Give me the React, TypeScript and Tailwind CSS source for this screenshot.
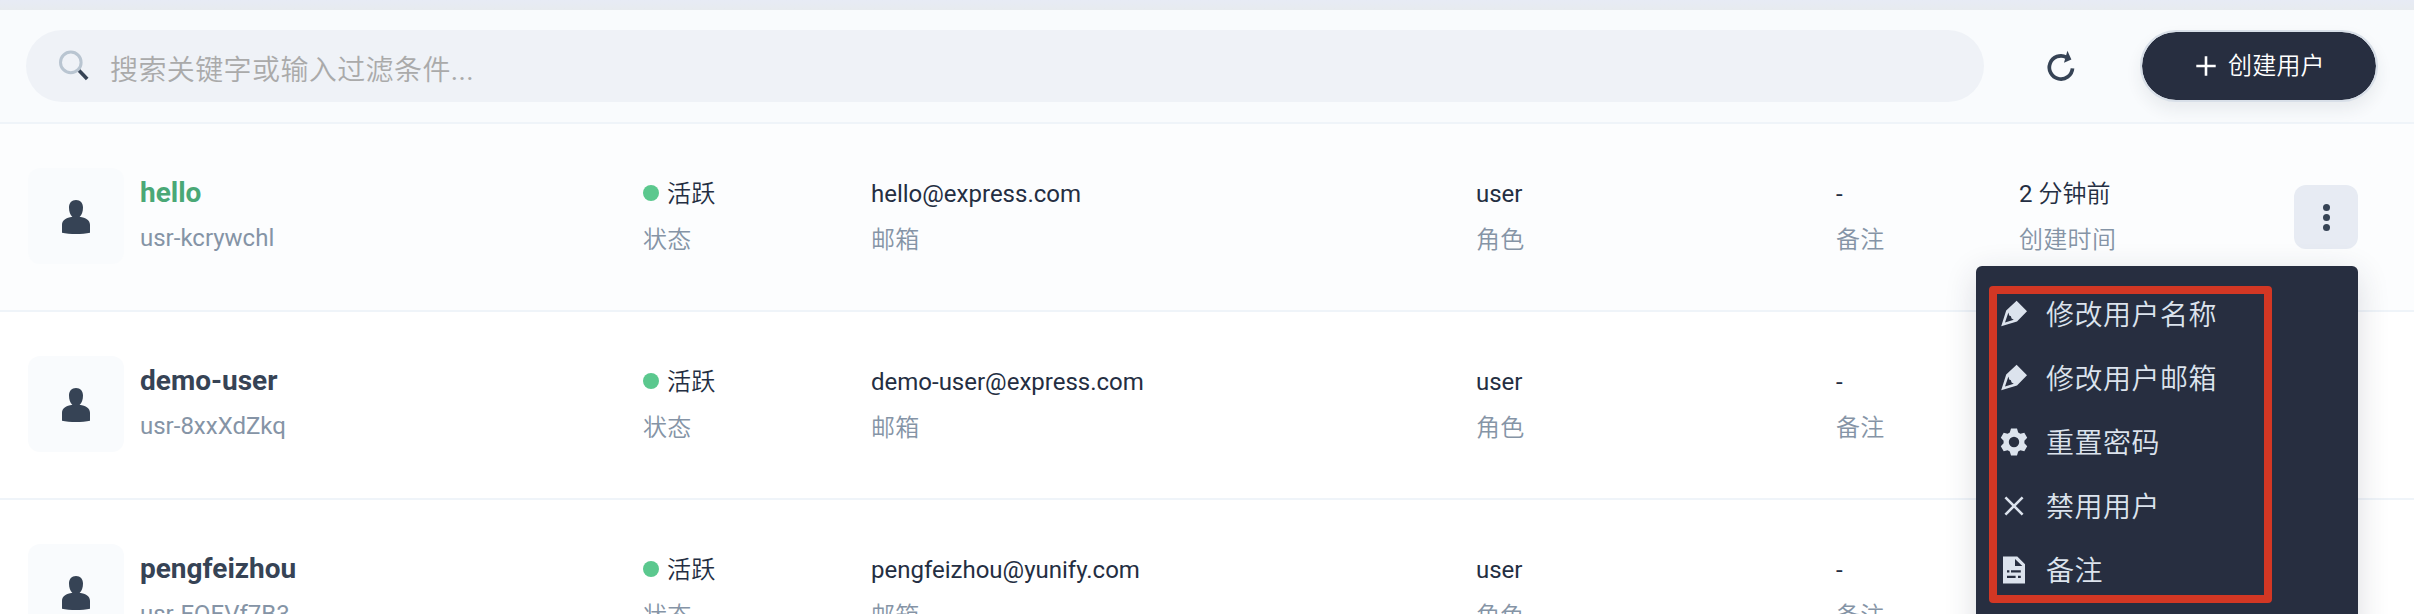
import React from "react";

function PersonIcon() {
  return (
    <svg className="mt-[2px]" width="28" height="34" viewBox="0 0 28 34" fill="#364355">
      <path d="M14 0C18.400 0 21 3 21 7.600C21 11.600 19.800 15.400 17.600 16.800C24 17.600 28 20.400 28 24.800V32.800C24.500 33.700 19 34 14 34C9 34 3.500 33.700 0 32.800V24.800C0 20.400 4 17.600 10.400 16.800C8.200 15.400 7 11.600 7 7.600C7 3 9.600 0 14 0Z" />
    </svg>
  );
}

function PencilIcon() {
  return (
    <svg width="32" height="32" viewBox="0 0 32 32" fill="#dce3ed">
      <path fillRule="evenodd" d="M18.600 2.800L29 13.200L19 23.600L3.200 28.200L8.200 12.600ZM10.400 14.400L7 24.400L15.800 21.800L13.600 20.400L12.900 18.200L11.200 17.600Z" />
    </svg>
  );
}

function GearIcon() {
  return (
    <svg width="32" height="32" viewBox="0 0 32 32" fill="#dce3ed">
      <path fillRule="evenodd" d="M13 2.500H19L20.200 6.600L22.400 7.800L26.300 6.800L29.200 11.800L26.400 14.700V17.300L29.200 20.200L26.300 25.200L22.400 24.200L20.200 25.400L19 29.500H13L11.800 25.400L9.600 24.200L5.700 25.200L2.800 20.200L5.600 17.300V14.700L2.800 11.800L5.700 6.800L9.600 7.800L11.800 6.600ZM16 10.800A5.200 5.200 0 1 0 16 21.200A5.200 5.200 0 1 0 16 10.800Z" />
    </svg>
  );
}

function CrossIcon() {
  return (
    <svg width="32" height="32" viewBox="0 0 32 32" fill="none" stroke="#dce3ed" strokeWidth="2.600">
      <path d="M7.400 7.400L24.600 24.600M24.600 7.400L7.400 24.600" />
    </svg>
  );
}

function NoteIcon() {
  return (
    <svg width="32" height="32" viewBox="0 0 32 32" fill="#dce3ed">
      <path fillRule="evenodd" d="M5 2.500H19.300L27 10.200V29.500H5ZM17 5V12H24.300ZM9 16.300V18.600H11.400V16.300ZM13 16.300V18.600H22.800V16.300ZM9 21.700V24H17.600V21.700ZM20 21.700V24H22.800V21.700Z" />
    </svg>
  );
}

const users = [
  { name: "hello", id: "usr-kcrywchl", email: "hello@express.com", created: "2 分钟前", active: true },
  { name: "demo-user", id: "usr-8xxXdZkq", email: "demo-user@express.com", created: "", active: false },
  { name: "pengfeizhou", id: "usr-EQEVf7B3", email: "pengfeizhou@yunify.com", created: "", active: false },
];

const actions = [
  { label: "修改用户名称", icon: <PencilIcon /> },
  { label: "修改用户邮箱", icon: <PencilIcon /> },
  { label: "重置密码", icon: <GearIcon /> },
  { label: "禁用用户", icon: <CrossIcon /> },
  { label: "备注", icon: <NoteIcon /> },
];

function Field({ width, value, label, dot }: { width: string; value: string; label: string; dot?: boolean }) {
  return (
    <div className={`${width} shrink-0 whitespace-nowrap pt-[6px]`}>
      <div className="flex h-10 items-center gap-2 text-[#242e42]">
        {dot && <span className="mb-[3px] size-4 rounded-full bg-[#5bc88e]" />}
        <span className={dot ? "tracking-[0.300px]" : ""}>{value}</span>
      </div>
      <div className="mt-[6px] flex h-10 items-center tracking-[0.300px] text-[#8594a6]">{label}</div>
    </div>
  );
}

function ActionMenu() {
  return (
    <div className="absolute top-[81px] right-0 z-10 h-[400px] w-[382px] rounded-md bg-[#272e40] pt-4 shadow-[0_8px_32px_rgba(36,46,66,0.16)]">
      {actions.map((a) => (
        <div key={a.label} className="flex h-16 items-center gap-4 pl-[22px] text-[28px] tracking-[0.500px] text-[#dce3ed]">
          {a.icon}
          <span className="pt-[3px]">{a.label}</span>
        </div>
      ))}
      <div className="absolute top-5 left-[13px] h-[317px] w-[283px]">
        <div className="size-full rounded border-8 border-[#d33724]" />
      </div>
    </div>
  );
}

function UserRow({ user }: { user: (typeof users)[number] }) {
  return (
    <div className={`flex h-[188px] shrink-0 items-start border-b-2 border-[#eff4f9] pt-11 pl-7 ${user.active ? "bg-[#fcfdfe]" : "bg-white"}`}>
      <div className="mr-4 flex size-24 shrink-0 items-center justify-center rounded-xl bg-[#f9fbfd]">
        <PersonIcon />
      </div>
      <div className="w-[503px] shrink-0 pt-[3px]">
        <div className={`flex h-10 items-center pt-1 text-[28px] font-bold ${user.active ? "text-[#4aa876]" : "text-[#364355]"}`}>{user.name}</div>
        <div className="mt-[7px] flex h-10 items-center text-[#8594a6]">{user.id}</div>
      </div>
      <Field width="w-[228px]" value="活跃" label="状态" dot />
      <Field width="w-[605px]" value={user.email} label="邮箱" />
      <Field width="w-[360px]" value="user" label="角色" />
      <Field width="w-[183px]" value="-" label="备注" />
      {user.active && (
        <>
          <Field width="w-[275px]" value={user.created} label="创建时间" />
          <div className="relative mt-[17px] flex size-16 shrink-0 flex-col items-center justify-center gap-[3px] rounded-xl bg-[#e7ebf3]">
            <span className="size-[7px] rounded-full bg-[#364355]" />
            <span className="size-[7px] rounded-full bg-[#364355]" />
            <span className="size-[7px] rounded-full bg-[#364355]" />
            <ActionMenu />
          </div>
        </>
      )}
    </div>
  );
}

export default function App() {
  return (
    <div className="flex h-[614px] w-[2414px] flex-col overflow-hidden bg-white font-[Roboto,'Noto_Sans_CJK_SC_DemiLight','Noto_Sans_CJK_SC',sans-serif] text-[24px] leading-none antialiased">
      <div className="h-[10px] shrink-0 bg-linear-to-b from-[#e7ebf5] to-[#e7ebef]" />
      <header className="flex h-[114px] shrink-0 items-center border-b-2 border-[#eff4f9] bg-[#f9fbfd] pr-9 pl-[26px]">
        <div className="flex h-[72px] w-[1958px] items-center rounded-full bg-[#eff2f7] pl-8 text-[28px] tracking-[0.400px] text-[#aaaaaa]">
          <svg width="32" height="32" viewBox="0 0 32 32" fill="none">
            <path d="M20.600 20L29.200 29" stroke="#364355" strokeWidth="3.600" />
            <circle cx="12.800" cy="12.400" r="10.300" stroke="#b9c5d1" strokeWidth="3" />
          </svg>
          <span className="pt-[9px] pl-5">搜索关键字或输入过滤条件...</span>
        </div>
        <svg className="ml-[61px]" width="32" height="32" viewBox="0 0 32 32" fill="none">
          <path d="M21.500 7.300A11.600 11.600 0 1 0 27.500 18.400" stroke="#364355" strokeWidth="3.700" />
          <path d="M22.400 0.700L26.400 9.400L19 12.800Z" fill="#364355" />
        </svg>
        <button className="ml-auto flex h-[72px] w-[238px] items-center rounded-full border-2 border-[#d8dfe8] bg-[#272e40] bg-clip-padding pl-[52px] tracking-[0.200px] text-white shadow-[0_8px_16px_rgba(36,46,66,0.08)]">
          <svg width="24" height="24" viewBox="0 0 24 24" stroke="white" strokeWidth="2.600">
            <path d="M12 2.300V21.700M2.300 12H21.700" />
          </svg>
          <span className="pl-[10px]">创建用户</span>
        </button>
      </header>
      {users.map((u) => (
        <UserRow key={u.name} user={u} />
      ))}
    </div>
  );
}
